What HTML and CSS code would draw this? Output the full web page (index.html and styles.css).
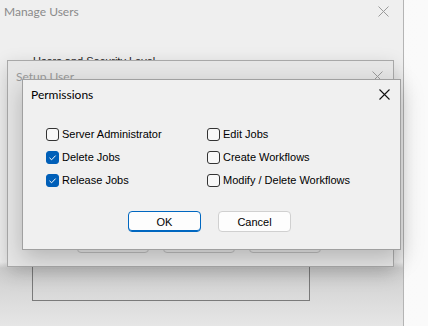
FILE: index.html
```html
<!DOCTYPE html>
<html lang="en">
<head>
    <meta charset="UTF-8">
    <title>Permissions</title>
    <link rel="stylesheet" href="styles.css">
</head>
<body>
    <div class="desk">
        <div class="win manage">
            <div class="titlebar">
                <span class="title">Manage Users</span>
                <svg class="close faded" viewBox="0 0 11 11" width="11" height="11"><path d="M0.5 0.5 L10.5 10.5 M10.5 0.5 L0.5 10.5" stroke="currentColor" stroke-width="1"/></svg>
            </div>
            <div class="group-label">Users and Security Level</div>
            <div class="user-list"></div>
        </div>

        <div class="win setup">
            <div class="titlebar">
                <span class="title">Setup User</span>
                <svg class="close faded" viewBox="0 0 11 11" width="11" height="11"><path d="M0.5 0.5 L10.5 10.5 M10.5 0.5 L0.5 10.5" stroke="currentColor" stroke-width="1"/></svg>
            </div>
            <div class="setup-buttons">
                <span class="ghost-btn"></span>
                <span class="ghost-btn"></span>
                <span class="ghost-btn"></span>
            </div>
        </div>

        <div class="win perms">
            <div class="titlebar">
                <span class="title">Permissions</span>
                <svg class="close" viewBox="0 0 11 11" width="11" height="11"><path d="M0.5 0.5 L10.5 10.5 M10.5 0.5 L0.5 10.5" stroke="currentColor" stroke-width="1.1"/></svg>
            </div>
            <div class="perm-grid">
                <label class="check"><span class="box"></span>Server Administrator</label>
                <label class="check"><span class="box"></span>Edit Jobs</label>
                <label class="check"><span class="box on"><svg viewBox="0 0 13 13" width="13" height="13"><path d="M3.5 6.8 L5.6 8.8 L9.6 4.6" fill="none" stroke="#fff" stroke-width="1"/></svg></span>Delete Jobs</label>
                <label class="check"><span class="box"></span>Create Workflows</label>
                <label class="check"><span class="box on"><svg viewBox="0 0 13 13" width="13" height="13"><path d="M3.5 6.8 L5.6 8.8 L9.6 4.6" fill="none" stroke="#fff" stroke-width="1"/></svg></span>Release Jobs</label>
                <label class="check"><span class="box"></span>Modify / Delete Workflows</label>
            </div>
            <div class="actions">
                <button class="btn default">OK</button>
                <button class="btn">Cancel</button>
            </div>
        </div>
    </div>
</body>
</html>
```

FILE: styles.css
```css
body {
    margin: 0;
    font-family: 'Liberation Sans', Arial, sans-serif;
    font-size: 11px;
    color: #000;
    background: #fff;
}
.desk {
    position: relative;
    width: 428px;
    height: 326px;
    overflow: hidden;
    background: linear-gradient(to right, #e4e4e4, #f7f7f7 14px, #fafafa);
}
.win {
    position: absolute;
    box-sizing: border-box;
}
.titlebar {
    display: flex;
    justify-content: space-between;
    align-items: center;
    font-family: 'Lato', 'Noto Sans', sans-serif;
    font-size: 12px;
}
.close {
    color: #111;
}
.close.faded {
    color: #9a9a9a;
}

/* Manage Users, bottom window */
.manage {
    left: 0;
    top: 0;
    width: 404px;
    height: 326px;
    border-right: 1px solid #b4b4b4;
    background: linear-gradient(to bottom, #efefef 0, #efefef 262px, #cfcfcf 268px, #e6e6e6 326px);
}
.manage .titlebar {
    height: 22px;
    padding: 0 14px 0 4px;
}
.manage .title {
    color: #8a8a8a;
}
.group-label {
    margin: 32px 0 0 33px;
    line-height: 14px;
    color: #222;
}
.user-list {
    position: absolute;
    left: 32px;
    top: 240px;
    width: 278px;
    height: 61px;
    box-sizing: border-box;
    border: 1px solid #7a7a7a;
}

/* Setup User, middle window */
.setup {
    left: 7px;
    top: 60px;
    width: 387px;
    height: 207px;
    border: 1px solid #a8a8a8;
    background: #e6e6e6;
    box-shadow: 0 6px 18px rgba(0, 0, 0, 0.18);
}
.setup .titlebar {
    height: 26px;
    padding: 2px 10px 0 8px;
}
.setup .title {
    color: #9a9a9a;
}
.setup-buttons {
    position: absolute;
    left: 69px;
    top: 170px;
    display: flex;
    gap: 14px;
}
.ghost-btn {
    width: 72px;
    height: 22px;
    box-sizing: border-box;
    border: 1px solid #bdbdbd;
    border-radius: 4px;
}

/* Permissions, top dialog */
.perms {
    left: 22px;
    top: 79px;
    width: 379px;
    height: 171px;
    border: 1px solid #a0a0a0;
    background: #f0f0f0;
    box-shadow: 0 8px 22px rgba(0, 0, 0, 0.22);
}
.perms .titlebar {
    height: 29px;
    padding: 0 10px 0 8px;
}
.perm-grid {
    display: grid;
    grid-template-columns: 161px auto;
    row-gap: 9px;
    margin: 18px 0 0 23px;
}
.check {
    display: flex;
    align-items: center;
    gap: 3px;
    height: 14px;
    white-space: nowrap;
}
.box {
    width: 13px;
    height: 13px;
    box-sizing: border-box;
    border: 1px solid #333;
    border-radius: 3px;
    background: #f8f8f8;
    display: flex;
}
.box.on {
    border-color: #005fb8;
    background: #005fb8;
}
.box svg {
    margin: -1px;
}
.actions {
    display: flex;
    gap: 17px;
    margin: 24px 0 0 105px;
}
.btn {
    width: 73px;
    height: 21px;
    padding: 0;
    font: inherit;
    color: #000;
    background: #fdfdfd;
    border: 1px solid #d0d0d0;
    border-radius: 4px;
}
.btn.default {
    border-color: #0067c0;
    box-shadow: inset 0 -1px 0 #0067c0;
}
```
